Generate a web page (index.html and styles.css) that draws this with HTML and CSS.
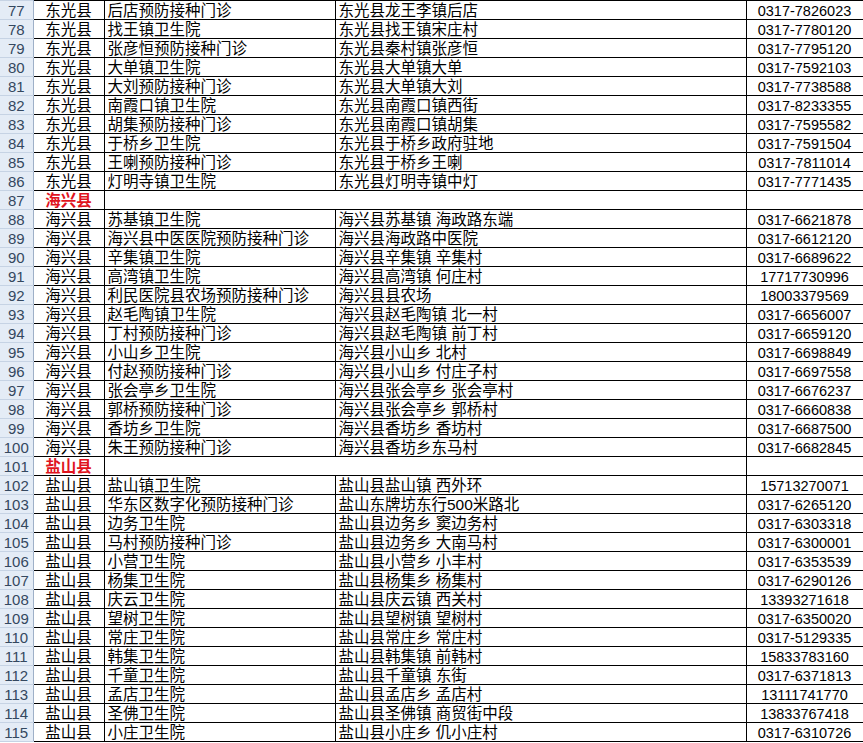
FILE: index.html
```html
<!DOCTYPE html>
<html lang="zh">
<head>
<meta charset="utf-8">
<title>Sheet</title>
<link rel="stylesheet" href="styles.css">
</head>
<body>
<table class="sheet">
<colgroup>
<col class="c-h"><col class="c-a"><col class="c-b"><col class="c-c"><col class="c-d">
</colgroup>
<tbody>
<tr><th>77</th><td class="a">东光县</td><td class="b">后店预防接种门诊</td><td class="c">东光县龙王李镇后店</td><td class="d">0317-7826023</td></tr>
<tr><th>78</th><td class="a">东光县</td><td class="b">找王镇卫生院</td><td class="c">东光县找王镇宋庄村</td><td class="d">0317-7780120</td></tr>
<tr><th>79</th><td class="a">东光县</td><td class="b">张彦恒预防接种门诊</td><td class="c">东光县秦村镇张彦恒</td><td class="d">0317-7795120</td></tr>
<tr><th>80</th><td class="a">东光县</td><td class="b">大单镇卫生院</td><td class="c">东光县大单镇大单</td><td class="d">0317-7592103</td></tr>
<tr><th>81</th><td class="a">东光县</td><td class="b">大刘预防接种门诊</td><td class="c">东光县大单镇大刘</td><td class="d">0317-7738588</td></tr>
<tr><th>82</th><td class="a">东光县</td><td class="b">南霞口镇卫生院</td><td class="c">东光县南霞口镇西街</td><td class="d">0317-8233355</td></tr>
<tr><th>83</th><td class="a">东光县</td><td class="b">胡集预防接种门诊</td><td class="c">东光县南霞口镇胡集</td><td class="d">0317-7595582</td></tr>
<tr><th>84</th><td class="a">东光县</td><td class="b">于桥乡卫生院</td><td class="c">东光县于桥乡政府驻地</td><td class="d">0317-7591504</td></tr>
<tr><th>85</th><td class="a">东光县</td><td class="b">王喇预防接种门诊</td><td class="c">东光县于桥乡王喇</td><td class="d">0317-7811014</td></tr>
<tr><th>86</th><td class="a">东光县</td><td class="b">灯明寺镇卫生院</td><td class="c">东光县灯明寺镇中灯</td><td class="d">0317-7771435</td></tr>
<tr class="group"><th>87</th><td class="a title">海兴县</td><td class="b" colspan="2"></td><td class="d"></td></tr>
<tr><th>88</th><td class="a">海兴县</td><td class="b">苏基镇卫生院</td><td class="c">海兴县苏基镇 海政路东端</td><td class="d">0317-6621878</td></tr>
<tr><th>89</th><td class="a">海兴县</td><td class="b">海兴县中医医院预防接种门诊</td><td class="c">海兴县海政路中医院</td><td class="d">0317-6612120</td></tr>
<tr><th>90</th><td class="a">海兴县</td><td class="b">辛集镇卫生院</td><td class="c">海兴县辛集镇 辛集村</td><td class="d">0317-6689622</td></tr>
<tr><th>91</th><td class="a">海兴县</td><td class="b">高湾镇卫生院</td><td class="c">海兴县高湾镇 何庄村</td><td class="d">17717730996</td></tr>
<tr><th>92</th><td class="a">海兴县</td><td class="b">利民医院县农场预防接种门诊</td><td class="c">海兴县县农场</td><td class="d">18003379569</td></tr>
<tr><th>93</th><td class="a">海兴县</td><td class="b">赵毛陶镇卫生院</td><td class="c">海兴县赵毛陶镇 北一村</td><td class="d">0317-6656007</td></tr>
<tr><th>94</th><td class="a">海兴县</td><td class="b">丁村预防接种门诊</td><td class="c">海兴县赵毛陶镇 前丁村</td><td class="d">0317-6659120</td></tr>
<tr><th>95</th><td class="a">海兴县</td><td class="b">小山乡卫生院</td><td class="c">海兴县小山乡 北村</td><td class="d">0317-6698849</td></tr>
<tr><th>96</th><td class="a">海兴县</td><td class="b">付赵预防接种门诊</td><td class="c">海兴县小山乡 付庄子村</td><td class="d">0317-6697558</td></tr>
<tr><th>97</th><td class="a">海兴县</td><td class="b">张会亭乡卫生院</td><td class="c">海兴县张会亭乡 张会亭村</td><td class="d">0317-6676237</td></tr>
<tr><th>98</th><td class="a">海兴县</td><td class="b">郭桥预防接种门诊</td><td class="c">海兴县张会亭乡 郭桥村</td><td class="d">0317-6660838</td></tr>
<tr><th>99</th><td class="a">海兴县</td><td class="b">香坊乡卫生院</td><td class="c">海兴县香坊乡 香坊村</td><td class="d">0317-6687500</td></tr>
<tr><th>100</th><td class="a">海兴县</td><td class="b">朱王预防接种门诊</td><td class="c">海兴县香坊乡东马村</td><td class="d">0317-6682845</td></tr>
<tr class="group"><th>101</th><td class="a title">盐山县</td><td class="b" colspan="2"></td><td class="d"></td></tr>
<tr><th>102</th><td class="a">盐山县</td><td class="b">盐山镇卫生院</td><td class="c">盐山县盐山镇 西外环</td><td class="d">15713270071</td></tr>
<tr><th>103</th><td class="a">盐山县</td><td class="b">华东区数字化预防接种门诊</td><td class="c">盐山东牌坊东行500米路北</td><td class="d">0317-6265120</td></tr>
<tr><th>104</th><td class="a">盐山县</td><td class="b">边务卫生院</td><td class="c">盐山县边务乡 窦边务村</td><td class="d">0317-6303318</td></tr>
<tr><th>105</th><td class="a">盐山县</td><td class="b">马村预防接种门诊</td><td class="c">盐山县边务乡 大南马村</td><td class="d">0317-6300001</td></tr>
<tr><th>106</th><td class="a">盐山县</td><td class="b">小营卫生院</td><td class="c">盐山县小营乡 小丰村</td><td class="d">0317-6353539</td></tr>
<tr><th>107</th><td class="a">盐山县</td><td class="b">杨集卫生院</td><td class="c">盐山县杨集乡 杨集村</td><td class="d">0317-6290126</td></tr>
<tr><th>108</th><td class="a">盐山县</td><td class="b">庆云卫生院</td><td class="c">盐山县庆云镇 西关村</td><td class="d">13393271618</td></tr>
<tr><th>109</th><td class="a">盐山县</td><td class="b">望树卫生院</td><td class="c">盐山县望树镇 望树村</td><td class="d">0317-6350020</td></tr>
<tr><th>110</th><td class="a">盐山县</td><td class="b">常庄卫生院</td><td class="c">盐山县常庄乡 常庄村</td><td class="d">0317-5129335</td></tr>
<tr><th>111</th><td class="a">盐山县</td><td class="b">韩集卫生院</td><td class="c">盐山县韩集镇 前韩村</td><td class="d">15833783160</td></tr>
<tr><th>112</th><td class="a">盐山县</td><td class="b">千童卫生院</td><td class="c">盐山县千童镇 东街</td><td class="d">0317-6371813</td></tr>
<tr><th>113</th><td class="a">盐山县</td><td class="b">孟店卫生院</td><td class="c">盐山县孟店乡 孟店村</td><td class="d">13111741770</td></tr>
<tr><th>114</th><td class="a">盐山县</td><td class="b">圣佛卫生院</td><td class="c">盐山县圣佛镇 商贸街中段</td><td class="d">13833767418</td></tr>
<tr><th>115</th><td class="a">盐山县</td><td class="b">小庄卫生院</td><td class="c">盐山县小庄乡 仉小庄村</td><td class="d">0317-6310726</td></tr>
</tbody>
</table>
</body>
</html>
```

FILE: styles.css
```css
html, body {
  margin: 0;
  padding: 0;
  background: #ffffff;
  overflow: hidden;
}

.sheet {
  border-collapse: collapse;
  table-layout: fixed;
  width: 863px;
  font-family: "Liberation Sans", "Noto Sans CJK SC", sans-serif;
  font-size: 15.5px;
  color: #000000;
}

.c-h { width: 33px; }
.c-a { width: 71px; }
.c-b { width: 231px; }
.c-c { width: 411px; }
.c-d { width: 117px; }

.sheet tr {
  height: 19px;
}

.sheet th,
.sheet td {
  height: 16px;
  padding: 2px 0 0 0;
  line-height: 16px;
  white-space: pre;
  overflow: hidden;
  vertical-align: bottom;
}

.sheet td {
  border: 1px solid #000000;
}

.sheet th {
  background: #e4ecf6;
  color: #34485f;
  font-family: "Liberation Sans", Arial, sans-serif;
  font-weight: normal;
  font-size: 15px;
  text-align: center;
  border-top: 1px solid #c6d3e4;
  border-bottom: 1px solid #c6d3e4;
  border-right: 1px solid #9eb0c8;
}

.sheet td.a {
  text-align: center;
}

.sheet td.b,
.sheet td.c {
  padding-left: 3px;
}

.sheet td.d {
  text-align: center;
  font-family: "Liberation Sans", Arial, sans-serif;
  font-size: 14.5px;
}

.sheet td.title {
  color: #e0141e;
  font-weight: bold;
}
```
